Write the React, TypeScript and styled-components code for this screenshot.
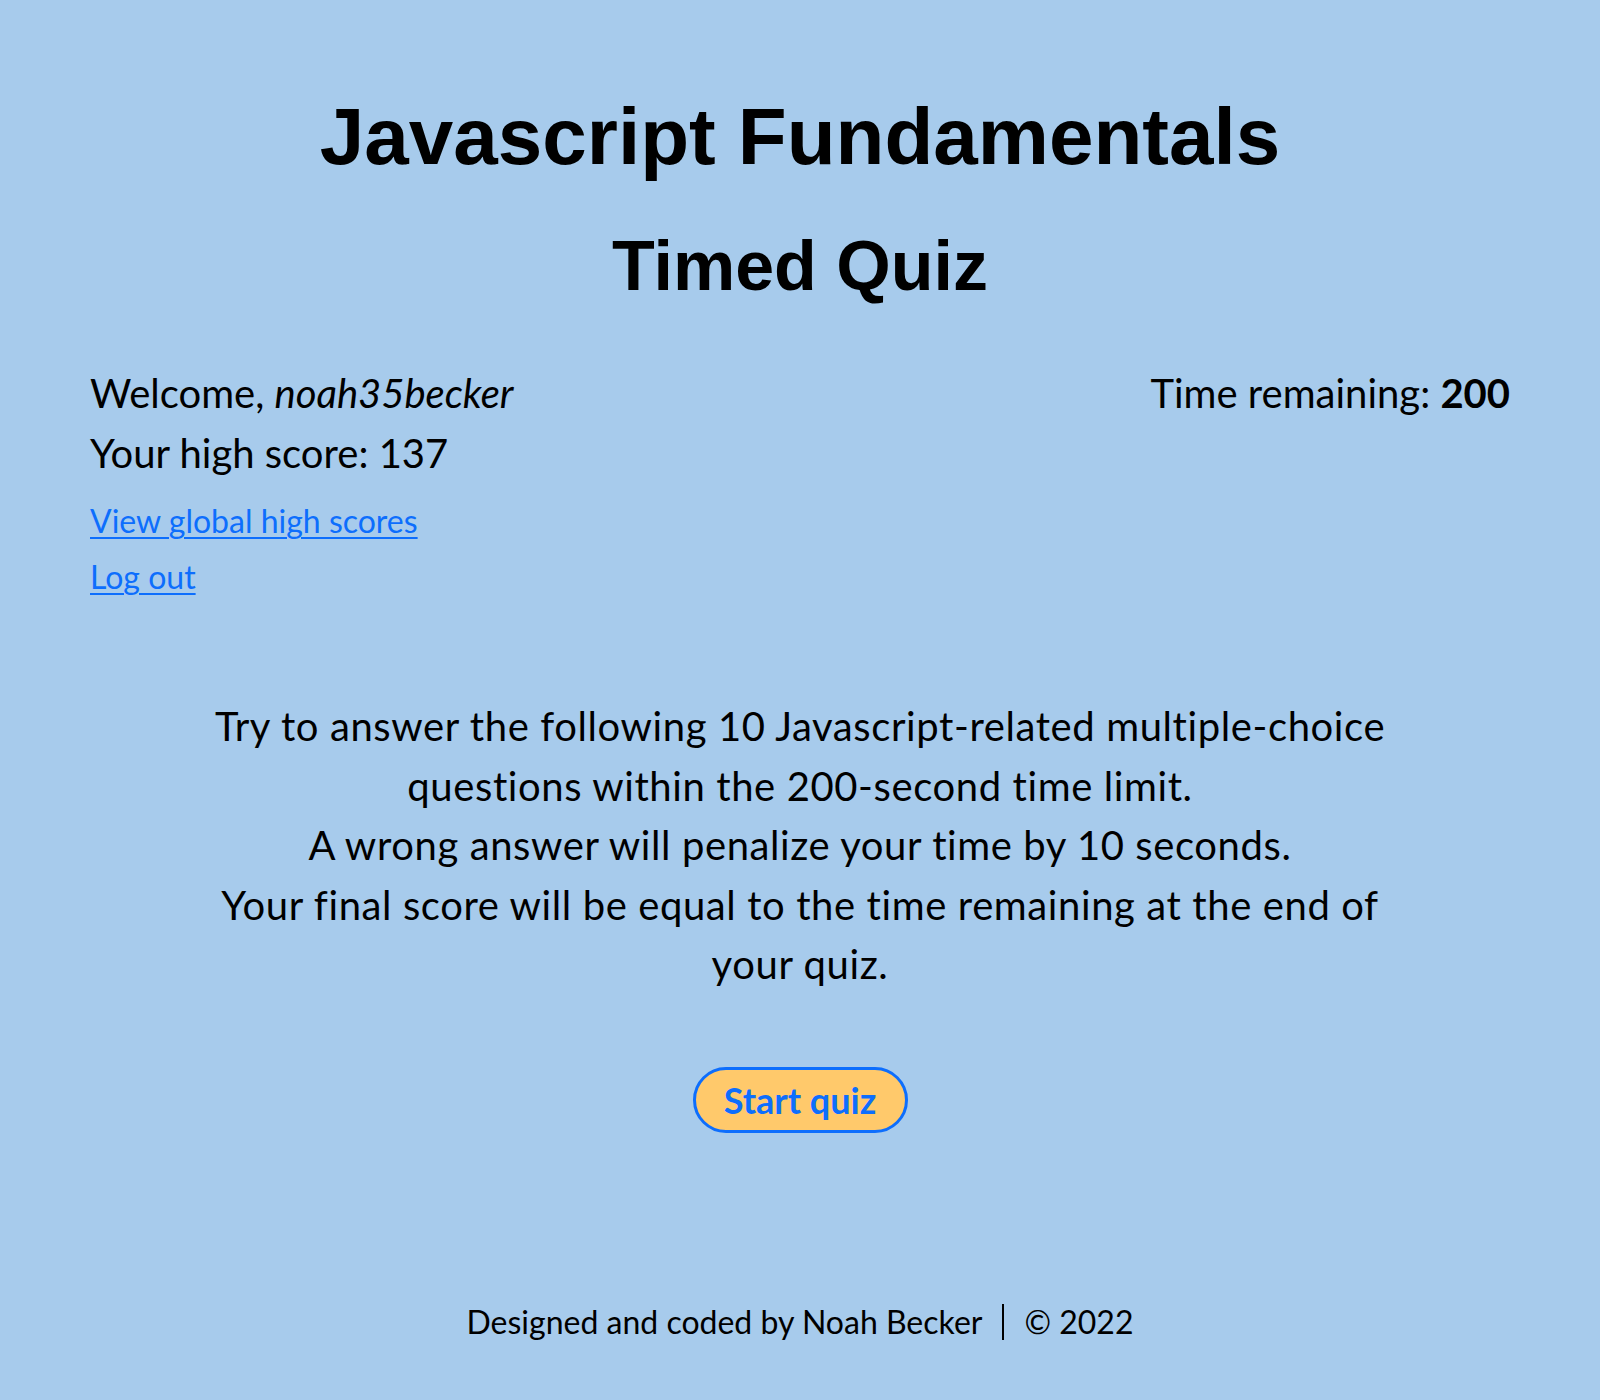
import React from "react";
import styled, { createGlobalStyle } from "styled-components";

const GlobalStyle = createGlobalStyle`
  html, body {
    margin: 0;
    padding: 0;
    background: #a7cbec;
  }
  body {
    font-family: Lato, "Open Sans", sans-serif;
    color: #000;
  }
`;

const Page = styled.div`
  min-height: 1400px;
  box-sizing: border-box;
  padding: 0 90px 0 90px;
  display: flex;
  flex-direction: column;
  background: #a7cbec;
`;

const Header = styled.header`
  display: flex;
  flex-direction: column;
  align-items: center;
  padding-top: 91px;
`;

const Title = styled.h1`
  margin: 0;
  font-family: "Liberation Sans", Arial, sans-serif;
  font-weight: 700;
  font-size: 80px;
  line-height: normal;
`;

const Subtitle = styled.h2`
  margin: 43px 0 0;
  font-family: "Liberation Sans", Arial, sans-serif;
  font-weight: 700;
  font-size: 70px;
  line-height: normal;
`;

const InfoBar = styled.section`
  display: flex;
  justify-content: space-between;
  align-items: flex-start;
  margin-top: 57px;
`;

const UserColumn = styled.div`
  display: flex;
  flex-direction: column;
`;

const InfoLine = styled.div`
  font-size: 40px;
  line-height: 60px;
`;

const LinkList = styled.div`
  display: flex;
  flex-direction: column;
  gap: 8px;
  margin-top: 14px;
`;

const NavLink = styled.a`
  font-size: 32px;
  line-height: 48px;
  color: #0d6efd;
  text-decoration: underline;
  text-underline-offset: 4px;
  text-decoration-thickness: 2px;
  align-self: flex-start;
  cursor: pointer;
`;

const Intro = styled.section`
  display: flex;
  flex-direction: column;
  align-items: center;
  margin-top: 96px;
`;

const IntroText = styled.p`
  margin: 0;
  max-width: 1200px;
  text-align: center;
  font-size: 40px;
  line-height: 59.5px;
  letter-spacing: 0.6px;
`;

const StartButton = styled.button`
  margin-top: 72px;
  align-self: center;
  width: 215px;
  height: 66px;
  box-sizing: border-box;
  border: 3px solid #0d6efd;
  border-radius: 33px;
  background: #ffc96b;
  color: #0d6efd;
  font-family: Lato, "Open Sans", sans-serif;
  font-weight: 700;
  font-size: 36px;
  cursor: pointer;
  padding: 0;
`;

const Footer = styled.footer`
  margin-top: auto;
  padding-bottom: 59px;
  display: flex;
  justify-content: center;
  align-items: center;
  font-size: 32px;
`;

const Divider = styled.span`
  display: inline-block;
  width: 2px;
  height: 36px;
  background: #000;
  margin: 0 20px;
`;

export default function App() {
  return (
    <>
      <GlobalStyle />
      <Page>
        <Header>
          <Title>Javascript Fundamentals</Title>
          <Subtitle>Timed Quiz</Subtitle>
        </Header>
        <InfoBar>
          <UserColumn>
            <InfoLine>
              Welcome, <em>noah35becker</em>
            </InfoLine>
            <InfoLine>Your high score: 137</InfoLine>
            <LinkList>
              <NavLink href="#">View global high scores</NavLink>
              <NavLink href="#">Log out</NavLink>
            </LinkList>
          </UserColumn>
          <InfoLine>
            Time remaining: <strong>200</strong>
          </InfoLine>
        </InfoBar>
        <Intro>
          <IntroText>
            Try to answer the following 10 Javascript-related multiple-choice
            questions within the 200-second time limit.
          </IntroText>
          <IntroText>A wrong answer will penalize your time by 10 seconds.</IntroText>
          <IntroText>
            Your final score will be equal to the time remaining at the end of
            your quiz.
          </IntroText>
        </Intro>
        <StartButton>Start quiz</StartButton>
        <Footer>
          <span>Designed and coded by Noah Becker</span>
          <Divider />
          <span>© 2022</span>
        </Footer>
      </Page>
    </>
  );
}
